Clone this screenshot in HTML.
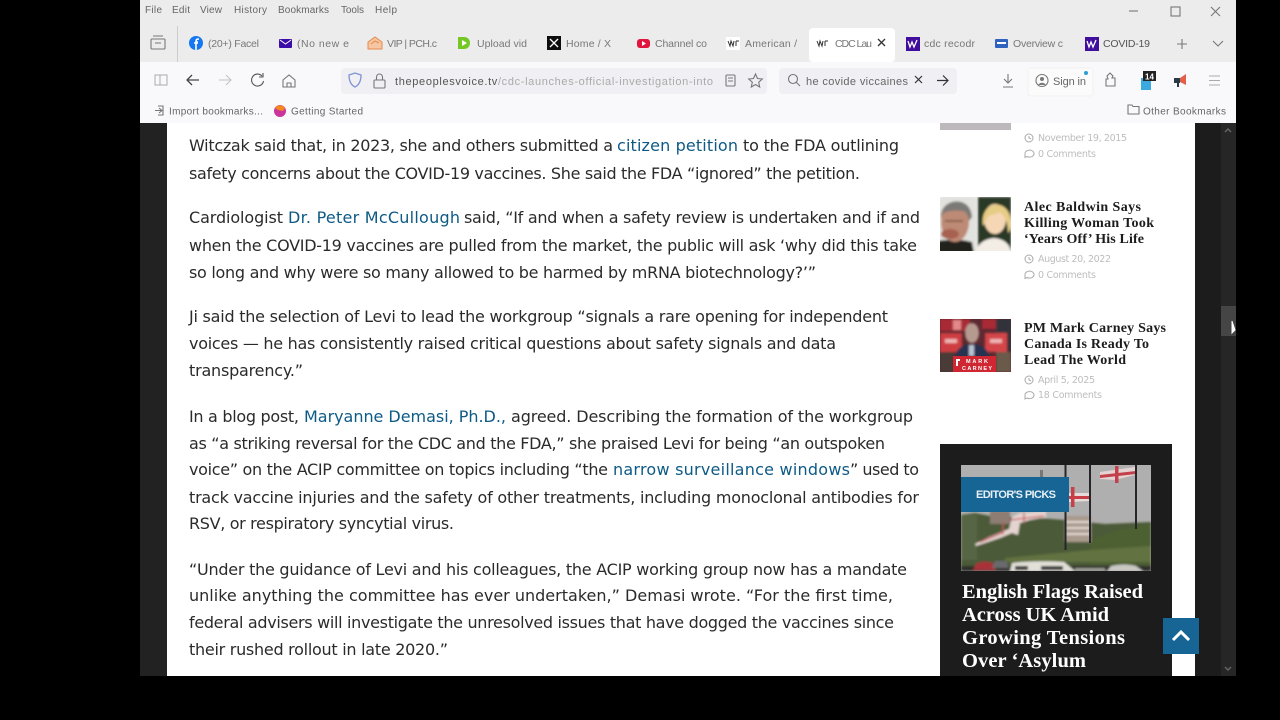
<!DOCTYPE html>
<html><head><meta charset="utf-8"><style>
html,body{margin:0;padding:0;background:#000;width:1280px;height:720px;overflow:hidden}
svg{display:block}
.b{font:16px "DejaVu Sans",sans-serif;fill:#2c2c2c}
.l{font:16px "DejaVu Sans",sans-serif;fill:#0f5a86}
.m{font:10px "Liberation Sans",sans-serif;fill:#666}
.t{font:10.5px "Liberation Sans",sans-serif;fill:#777}
.s{font:bold 14px "Liberation Serif",serif;fill:#1c1c1c}
.d{font:9.5px "DejaVu Sans",sans-serif;fill:#bdbdbd}
.w{font:bold 20.5px "Liberation Serif",serif;fill:#fff}
.i{fill:none;stroke:#777;stroke-width:1.1}
</style></head><body>
<svg width="1280" height="720" viewBox="0 0 1280 720" xmlns="http://www.w3.org/2000/svg">
<defs><filter id="bl"><feGaussianBlur stdDeviation="0.3"/></filter><filter id="bi"><feGaussianBlur stdDeviation="1"/></filter></defs>
<rect width="1280" height="720" fill="#000"/>
<g filter="url(#bl)">
<!-- chrome -->
<rect x="140" y="0" width="1096" height="62" fill="#ececec"/>
<rect x="140" y="62" width="1096" height="61" fill="#f9f9fb"/>
<text class="m" x="145" y="13" textLength="17">File</text>
<text class="m" x="172" y="13" textLength="18">Edit</text>
<text class="m" x="200" y="13" textLength="22">View</text>
<text class="m" x="234" y="13" textLength="33">History</text>
<text class="m" x="278" y="13" textLength="51">Bookmarks</text>
<text class="m" x="341" y="13" textLength="23">Tools</text>
<text class="m" x="375" y="13" textLength="22">Help</text>
<path class="i" d="M1129 11h9"/><rect class="i" x="1171" y="7" width="9" height="9"/><path class="i" d="M1211 7l9 9M1220 7l-9 9"/>
<!-- tabs -->
<rect class="i" x="151" y="39" width="14" height="10" rx="1"/><path class="i" d="M153 36h10M155 43h6"/>
<path d="M177.500 26v36" stroke="#ccc"/>
<rect x="809" y="28" width="86" height="34" rx="4" fill="#fff"/>
<circle cx="196" cy="43" r="7" fill="#1877f2"/><path d="M196 50v-8h2M194 43h4M196 42c0-3 1-3 3-3" stroke="#fff" stroke-width="1.600" fill="none"/>
<rect x="279" y="39" width="13" height="9" rx="1" fill="#3b0aa8"/><path d="M280 40l5.500 4 5.500-4" stroke="#fff" fill="none"/>
<path d="M368 42l7-5 7 5v7h-14z" fill="#f6c6a2" stroke="#e58a4e"/><path d="M371 44l4-3 4 2" stroke="#e58a4e" fill="none"/>
<path d="M458 37h6c8 0 8 12 0 12h-6z" fill="#74c725"/><path d="M462 40l5 3-5 3z" fill="#fff"/>
<rect x="547" y="36" width="14" height="14" fill="#111"/><path d="M550 39l8 8M558 39l-8 8" stroke="#fff" stroke-width="1.300"/>
<rect x="637" y="39" width="13" height="9" rx="3" fill="#e0123c"/><path d="M642 41l4 2.500-4 2.500z" fill="#fff"/>
<rect x="726" y="37" width="14" height="13" fill="#fff"/><path d="M728 41l2 5 1-5 2 5 1-5M736 41h3M736 41v5" stroke="#333" fill="none"/>
<path d="M817 41l2 5 1-5 2 5 1-5M825 41h3M825 41v5" stroke="#333" fill="none"/>
<rect x="906" y="37" width="14" height="14" fill="#40109c"/><path d="M908 41l2 6 2-5 2 5 3-7" stroke="#fff" stroke-width="1.300" fill="none"/>
<rect x="995" y="39" width="13" height="9" rx="1" fill="#2f63c0"/><path d="M997 43h9" stroke="#fff" stroke-width="2"/>
<rect x="1085" y="37" width="14" height="14" fill="#40109c"/><path d="M1087 41l2 6 2-5 2 5 3-7" stroke="#fff" stroke-width="1.300" fill="none"/>
<text class="t" x="208" y="47" textLength="51">(20+) Facel</text>
<text class="t" x="297" y="47" textLength="52">(No new e</text>
<text class="t" x="387" y="47" textLength="50">VIP | PCH.c</text>
<text class="t" x="477" y="47" textLength="50">Upload vid</text>
<text class="t" x="566" y="47" textLength="45">Home / X</text>
<text class="t" x="655" y="47" textLength="52">Channel co</text>
<text class="t" x="745" y="47" textLength="52">American /</text>
<text class="t" x="835" y="47" textLength="37">CDC Lau</text>
<path d="M878 39l7 7M885 39l-7 7" stroke="#333" stroke-width="1.300"/>
<text class="t" x="924" y="47" textLength="51">cdc recodr</text>
<text class="t" x="1013" y="47" textLength="50">Overview c</text>
<text class="t" x="1103" y="47" textLength="47" style="fill:#555">COVID-19</text>
<path class="i" d="M1182 39v10M1177 44h10M1213 41l5 5 5-5"/>
<!-- nav -->
<rect x="155" y="75" width="12" height="10" fill="none" stroke="#aaa"/><path d="M160 75v10" stroke="#aaa" fill="none"/>
<path d="M187 80h12M192 75l-5 5 5 5" stroke="#444" stroke-width="1.300" fill="none"/>
<path d="M219 80h12M226 75l5 5-5 5" stroke="#c4c4c4" stroke-width="1.100" fill="none"/>
<path d="M262 76a6 6 0 1 0 1.500 5M263 73v4h-4" stroke="#555" stroke-width="1.100" fill="none"/>
<path class="i" d="M283 80l6-5 6 5v7h-12zM287 87v-4h4v4"/>
<rect x="341" y="68" width="426" height="26" rx="4" fill="#f0f0f4"/>
<path d="M349 75l6-2 6 2c0 6-2 10-6 12-4-2-6-6-6-12z" fill="none" stroke="#7f92d4" stroke-width="1.300"/>
<rect class="i" x="374" y="80" width="11" height="8" rx="1"/><path class="i" d="M376.500 80v-3a3 3 0 0 1 6 0v3"/>
<text x="395" y="85" font-family="Liberation Sans" font-size="11" textLength="318"><tspan fill="#555">thepeoplesvoice.tv</tspan><tspan fill="#aaa">/cdc-launches-official-investigation-into</tspan></text>
<rect class="i" x="726" y="75" width="9" height="11" rx="1"/><path class="i" d="M728 78h5M728 81h5"/>
<path class="i" d="M755.500 74l2 4.500 4.800.5-3.600 3.200 1 4.800-4.200-2.500-4.200 2.500 1-4.800-3.600-3.200 4.800-.5z"/>
<rect x="779" y="68" width="178" height="26" rx="4" fill="#f0f0f4"/>
<circle class="i" cx="793" cy="79" r="4.500"/><path class="i" d="M796 82l4 4"/>
<text x="806" y="85" font-family="Liberation Sans" font-size="11" fill="#666" textLength="102">he covide viccaines</text>
<path d="M915 76l7 7M922 76l-7 7M937 80.500h11M943 75.500l5 5-5 5" stroke="#333" stroke-width="1.200" fill="none"/>
<path class="i" d="M1008 74v9M1004 79l4 4 4-4M1003 87h10"/>
<rect x="1028" y="68" width="65" height="28" rx="3" fill="#fbfbfc" stroke="#f1f1f1"/>
<circle class="i" cx="1042" cy="80.500" r="6"/><circle cx="1042" cy="79" r="2" fill="#777"/><path d="M1038 85c2-3 6-3 8 0" fill="#777"/>
<text x="1053" y="85" font-family="Liberation Sans" font-size="11" fill="#666" textLength="33">Sign in</text>
<circle cx="1086" cy="73" r="2" fill="#2a9fd8"/>
<path class="i" d="M1106 86v-7h2l-1-3 3-3 3 3-1 2h3v8z"/>
<rect x="1141" y="78" width="10" height="12" fill="#3ba9e0"/><rect x="1143" y="71" width="13" height="10" fill="#222"/>
<text x="1145" y="79.500" font-family="Liberation Sans" font-size="8" font-weight="bold" fill="#fff">14</text>
<path d="M1176 79l4-1 6-4v11l-6-3-4-1z" fill="#e0604a"/><rect x="1174" y="78" width="6" height="5" fill="#2b3b46"/><rect x="1177" y="83" width="2" height="4" fill="#2b3b46"/>
<path class="i" d="M1209 76h11M1209 80.500h11M1209 85h11" style="stroke:#aaa"/>
<!-- bookmarks -->
<path class="i" d="M155 110.500h7M159 108l3 2.500-3 2.500M158 106h5v9h-5"/>
<text class="m" x="169" y="114.500" textLength="94">Import bookmarks...</text>
<circle cx="280" cy="111" r="6" fill="#c9349b"/><path d="M275 108a6 6 0 0 1 10 0l-2 3-5-1z" fill="#f5881f"/>
<text class="m" x="291" y="114.500" textLength="72">Getting Started</text>
<path class="i" d="M1128 114v-9h4l1 1.500h6v7.500z"/>
<text class="m" x="1143" y="114.500" textLength="83">Other Bookmarks</text>
<!-- page -->
<rect x="140" y="123" width="27" height="553" fill="#232323"/>
<rect x="167" y="123" width="1028" height="553" fill="#fff"/>
<rect x="1195" y="123" width="41" height="553" fill="#1f1f1f"/>
<rect x="1221" y="123" width="15" height="553" fill="#252525"/>
<rect x="1221" y="306" width="15" height="30" fill="#444"/>
<path d="M1232 321v12l3-3z" fill="#fff" stroke="#fff"/>
<path d="M1225 132l3-3 3 3M1225 667l3 3 3-3" stroke="#666" stroke-width="1.400" fill="none"/>
<!-- article -->
<text class="b" x="189" y="151" textLength="424">Witczak said that, in 2023, she and others submitted a</text>
<text class="l" x="617" y="151" textLength="121">citizen petition</text>
<text class="b" x="743" y="151" textLength="156">to the FDA outlining</text>
<text class="b" x="189" y="179" textLength="671">safety concerns about the COVID-19 vaccines. She said the FDA “ignored” the petition.</text>
<text class="b" x="189" y="223" textLength="94">Cardiologist</text>
<text class="l" x="288" y="223" textLength="172">Dr. Peter McCullough</text>
<text class="b" x="464" y="223" textLength="456">said, “If and when a safety review is undertaken and if and</text>
<text class="b" x="189" y="251" textLength="728">when the COVID-19 vaccines are pulled from the market, the public will ask ‘why did this take</text>
<text class="b" x="189" y="278" textLength="627">so long and why were so many allowed to be harmed by mRNA biotechnology?’”</text>
<text class="b" x="189" y="322" textLength="699">Ji said the selection of Levi to lead the workgroup “signals a rare opening for independent</text>
<text class="b" x="189" y="349" textLength="647">voices — he has consistently raised critical questions about safety signals and data</text>
<text class="b" x="189" y="376" textLength="114">transparency.”</text>
<text class="b" x="189" y="422" textLength="110">In a blog post,</text>
<text class="l" x="304" y="422" textLength="202">Maryanne Demasi, Ph.D.,</text>
<text class="b" x="511" y="422" textLength="402">agreed. Describing the formation of the workgroup</text>
<text class="b" x="189" y="449" textLength="696">as “a striking reversal for the CDC and the FDA,” she praised Levi for being “an outspoken</text>
<text class="b" x="189" y="475" textLength="419">voice” on the ACIP committee on topics including “the</text>
<text class="l" x="613" y="475" textLength="237">narrow surveillance windows</text>
<text class="b" x="850" y="475" textLength="69">” used to</text>
<text class="b" x="189" y="503" textLength="730">track vaccine injuries and the safety of other treatments, including monoclonal antibodies for</text>
<text class="b" x="189" y="529" textLength="265">RSV, or respiratory syncytial virus.</text>
<text class="b" x="189" y="575" textLength="718">“Under the guidance of Levi and his colleagues, the ACIP working group now has a mandate</text>
<text class="b" x="189" y="601" textLength="704">unlike anything the committee has ever undertaken,” Demasi wrote. “For the first time,</text>
<text class="b" x="189" y="628" textLength="705">federal advisers will investigate the unresolved issues that have dogged the vaccines since</text>
<text class="b" x="189" y="655" textLength="259">their rushed rollout in late 2020.”</text>
<!-- sidebar -->
<rect x="940" y="123" width="71" height="7" fill="#bdb8bb"/>
<text class="d" x="1038" y="141" textLength="89">November 19, 2015</text>
<text class="d" x="1038" y="157" textLength="58">0 Comments</text>
<g fill="none" stroke="#aaa">
<circle cx="1029" cy="138" r="4"/><path d="M1029 136v2l2 1"/><path d="M1025 153.500a4.500 3.500 0 1 1 2 3l-2 1z"/>
<circle cx="1029" cy="259" r="4"/><path d="M1029 257v2l2 1"/><path d="M1025 274.500a4.500 3.500 0 1 1 2 3l-2 1z"/>
<circle cx="1029" cy="380" r="4"/><path d="M1029 378v2l2 1"/><path d="M1025 395a4.500 3.500 0 1 1 2 3l-2 1z"/>
</g>
<!-- alec thumb -->
<svg x="940" y="197" width="71" height="54" viewBox="940 197 71 54">
<rect x="940" y="197" width="71" height="54" fill="#ececea"/>
<g filter="url(#bi)">
<rect x="940" y="197" width="36" height="54" fill="#e2e2de"/>
<rect x="978" y="197" width="33" height="54" fill="#2c3826"/>
<path d="M938 253v-12c10-2 24-2 34 1l2 11z" fill="#24211f"/>
<ellipse cx="955" cy="222" rx="14" ry="20" fill="#bd8a74"/>
<ellipse cx="950" cy="234" rx="9" ry="5" fill="#a8604f"/>
<path d="M941 218c-2-20 30-24 31-1l-3 4c-1-6-3-9-6-10-8-1-15 0-20 2z" fill="#7c7a76"/>
<path d="M945 221h18" stroke="#7a5244" stroke-width="1.500"/>
<path d="M976 253c1-9 8-14 18-15 9 1 16 5 17 15z" fill="#f3ede6"/>
<ellipse cx="995" cy="219" rx="11" ry="15" fill="#f5d7b6"/>
<path d="M983 226c-4-27 28-29 28-3 0 5-1 8-3 10 0-10-3-17-8-21-4 3-10 2-12 5-2 3-4 8-5 9z" fill="#e6cc85"/>
</g>
</svg>
<text class="s" x="1024" y="211" textLength="117">Alec Baldwin Says</text>
<text class="s" x="1024" y="227" textLength="130">Killing Woman Took</text>
<text class="s" x="1024" y="243" textLength="120">‘Years Off’ His Life</text>
<text class="d" x="1038" y="262" textLength="73">August 20, 2022</text>
<text class="d" x="1038" y="278" textLength="58">0 Comments</text>
<!-- carney thumb -->
<svg x="940" y="319" width="71" height="53" viewBox="940 319 71 53">
<rect x="940" y="319" width="71" height="53" fill="#5c2a30"/>
<g filter="url(#bi)">
<rect x="940" y="319" width="30" height="12" fill="#a92c34"/>
<rect x="982" y="319" width="14" height="10" fill="#a92c34"/>
<rect x="996" y="319" width="15" height="32" fill="#33303a"/>
<rect x="940" y="333" width="22" height="19" fill="#cf3c42"/>
<rect x="985" y="333" width="22" height="19" fill="#d4444a"/>
<rect x="945" y="339" width="12" height="4" fill="#eeb6b4"/><rect x="990" y="339" width="12" height="4" fill="#eeb6b4"/>
<rect x="953" y="320" width="8" height="10" fill="#e2898a"/>
<path d="M954 360c2-13 10-16 18-16s16 3 19 16z" fill="#26324f"/>
<rect x="969" y="345" width="5" height="11" fill="#b9c4d4"/>
<ellipse cx="972" cy="333" rx="7" ry="10" fill="#b59a90"/>
<rect x="940" y="352" width="14" height="20" fill="#4a3a38"/><rect x="996" y="352" width="15" height="20" fill="#6a5a48"/>
</g>
<rect x="953" y="356" width="43" height="16" fill="#cf2731"/>
<text x="966" y="363" font-family="Liberation Sans" font-size="5.500" font-weight="bold" fill="#fff" textLength="22">MARK</text>
<text x="962" y="370" font-family="Liberation Sans" font-size="5.500" font-weight="bold" fill="#fff" textLength="30">CARNEY</text>
<path d="M956 359h4v2h-2v5h-2z" fill="#fff"/>
</svg>
<text class="s" x="1024" y="332" textLength="142">PM Mark Carney Says</text>
<text class="s" x="1024" y="348" textLength="125">Canada Is Ready To</text>
<text class="s" x="1024" y="364" textLength="102">Lead The World</text>
<text class="d" x="1038" y="383" textLength="57">April 5, 2025</text>
<text class="d" x="1038" y="398" textLength="64">18 Comments</text>
<!-- editor card -->
<rect x="940" y="444" width="232" height="232" fill="#1d1d1d"/>
<svg x="961" y="465" width="190" height="106" viewBox="961 465 190 106">
<rect x="961" y="465" width="190" height="106" fill="#b0afaf"/>
<g filter="url(#bi)">
<path d="M961 515l14-2 20 4 30 0 40 3 40 4 46-2v49H961z" fill="#4c5a38"/>
<path d="M1090 540c20-8 40-14 61-16v40h-61z" fill="#4e6132"/>
<path d="M961 515h16v45h-16z" fill="#566644"/>
<path d="M1005 558l85-8 61-4v16H1005z" fill="#62723f"/>
<rect x="1065" y="516" width="26" height="26" fill="#a89a8c"/>
<path d="M1066 522h24M1066 528h24M1066 534h24" stroke="#e4dcd4" stroke-width="2"/>
<rect x="990" y="511" width="20" height="13" fill="#8d7d72"/>
<path d="M975 544l14-7 12-5 8-3 3-12 8-4 26-2v6l-16 3-10 3-2 12-6-2-12 5-24 8z" fill="#e4d4d0"/>
<path d="M980 542l24-10M1024 513v10M1010 520l34-4M1003 522v12" stroke="#c9545a" stroke-width="1.300" fill="none"/>
<rect x="961" y="566" width="190" height="5" fill="#2e2f2a"/>
<path d="M973 570l3-6c4-3 14-3 18 0l2 6z" fill="#a83038"/>
<path d="M992 568l3-7h11l3 7z" fill="#6a6a6e"/>
<path d="M1010 571l2-8c14-2 38-2 52-1l11 9z" fill="#e2e0d8"/>
<path d="M1015 570v-4h13v4zM1041 570v-4h22v4z" fill="#2e2e2c"/>
<path d="M1075 570h30v-1.500h-30z" fill="#bfbfb8"/>
<path d="M1107 571l4-5c8-2 18-2 25 0l7 5z" fill="#c9c8c2"/>
</g>
<path d="M1100 472l35-5 0 8-20 5-15-1z" fill="#e5d2d2"/>
<path d="M1100 475l36-4v3l-36 4zM1115 466h3.500v17h-3.500z" fill="#c2404a"/>
<path d="M1069 493h20v8l-20 1z" fill="#e6dddb"/>
<path d="M1069 496h20v3h-20zM1071 487h3.500v20h-3.500z" fill="#c84046"/>
<path d="M1064.500 465h2v85h-2zM1089 465h2v78h-2zM1135 465h2v64h-2z" fill="#26262a"/>
<path d="M1040 470h3v10h-3z" fill="#777"/>
</svg>
<rect x="961" y="477" width="108" height="35" fill="#156594"/>
<text x="976" y="498" font-family="Liberation Sans" font-size="11" font-weight="bold" fill="#e8f0f5" textLength="80">EDITOR'S PICKS</text>
<text class="w" x="962" y="598" textLength="181">English Flags Raised</text>
<text class="w" x="962" y="621" textLength="147">Across UK Amid</text>
<text class="w" x="962" y="644" textLength="163">Growing Tensions</text>
<text class="w" x="962" y="667" textLength="124">Over ‘Asylum</text>
<rect x="1163" y="618" width="36" height="36" fill="#156594"/>
<path d="M1173 640l8-8 8 8" stroke="#fff" stroke-width="3" fill="none"/>
</g>
</svg>
</body></html>
